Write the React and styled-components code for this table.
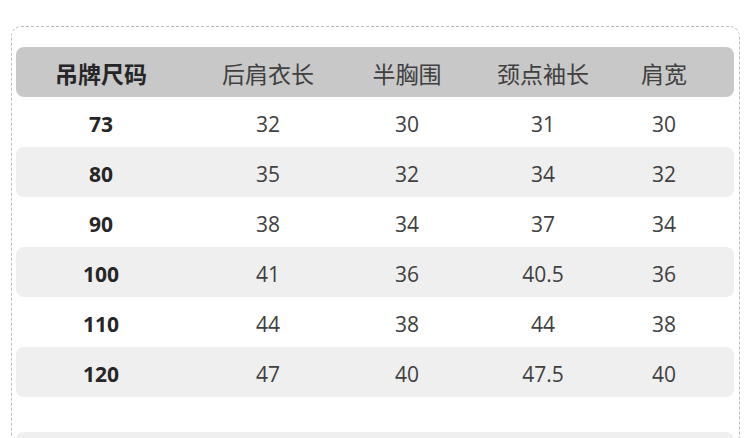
import React from 'react';
import styled, { createGlobalStyle } from 'styled-components';

const GlobalStyle = createGlobalStyle`
  html, body {
    margin: 0;
    padding: 0;
    background: #fff;
  }
  body {
    font-family: 'Open Sans', 'Noto Sans CJK SC', sans-serif;
    overflow: hidden;
  }
`;

const columns = ['吊牌尺码', '后肩衣长', '半胸围', '颈点袖长', '肩宽'];

const rows = [
  ['73', '32', '30', '31', '30'],
  ['80', '35', '32', '34', '32'],
  ['90', '38', '34', '37', '34'],
  ['100', '41', '36', '40.5', '36'],
  ['110', '44', '38', '44', '38'],
  ['120', '47', '40', '47.5', '40'],
];

const Page = styled.div`
  padding: 26px 10px 0 11px;
  width: 750px;
  height: 438px;
  box-sizing: border-box;
  overflow: hidden;
`;

const Card = styled.div`
  border: 1px dashed #bdbdbd;
  border-radius: 10px;
  padding: 20px 5px 0 4px;
  height: 460px;
  box-sizing: border-box;
`;

const Row = styled.div`
  display: grid;
  grid-template-columns: 170px 164px 114px 158px 84px;
  align-items: center;
  height: 50px;
  border-radius: 8px;
  background: ${(p) => (p.$head ? '#c8c8c8' : p.$shade ? '#efefef' : 'transparent')};
`;

const Cell = styled.div`
  text-align: center;
  font-family: 'Open Sans', 'Noto Sans CJK SC', sans-serif;
  font-size: ${(p) => (p.$head ? '23px' : '21px')};
  font-weight: ${(p) => (p.$bold ? 700 : 400)};
  color: ${(p) => (p.$bold ? '#262626' : '#404040')};
  line-height: 1;
  padding-top: ${(p) => (p.$head ? '4px' : '4px')};
`;

const Spacer = styled.div`
  height: 35px;
`;

const NextBar = styled.div`
  height: 50px;
  border-radius: 8px;
  background: #efefef;
`;

export default function App() {
  return (
    <Page>
      <GlobalStyle />
      <Card>
        <Row $head>
          {columns.map((c, i) => (
            <Cell key={c} $head $bold={i === 0}>
              {c}
            </Cell>
          ))}
        </Row>
        {rows.map((r, idx) => (
          <Row key={r[0]} $shade={idx % 2 === 1}>
            {r.map((v, i) => (
              <Cell key={i} $bold={i === 0}>
                {v}
              </Cell>
            ))}
          </Row>
        ))}
        <Spacer />
        <NextBar />
      </Card>
    </Page>
  );
}
